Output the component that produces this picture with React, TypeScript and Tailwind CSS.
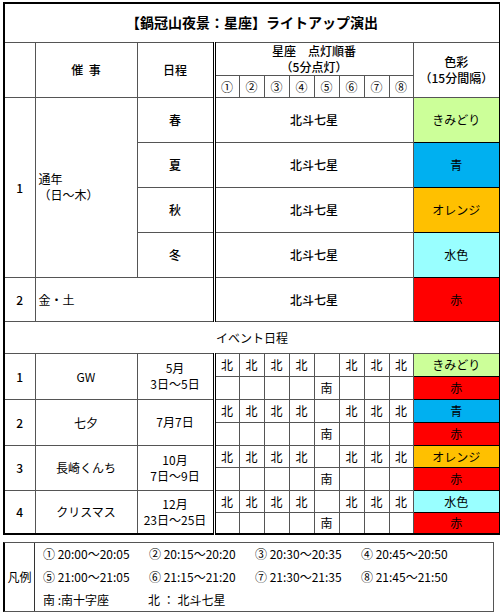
import React from 'react'

const font = { fontFamily: '"Noto Sans CJK JP", "Noto Sans", sans-serif' }

const cell = 'border border-[#555] text-center align-middle p-0 text-[12px] leading-[15px] text-black'
const dbl = 'border-l-[3px] border-l-black border-double'
const circled = ['①', '②', '③', '④', '⑤', '⑥', '⑦', '⑧']

const seasons = [
  { name: '春', color: 'bg-[#ccff99]', label: 'きみどり' },
  { name: '夏', color: 'bg-[#00b0f0]', label: '青' },
  { name: '秋', color: 'bg-[#ffc000]', label: 'オレンジ' },
  { name: '冬', color: 'bg-[#99ffff]', label: '水色' },
]

const events = [
  { no: '1', name: 'GW', date: ['5月', '3日～5日'], color: 'bg-[#ccff99]', label: 'きみどり', h: ['h-[23px]', 'h-[23px]'] },
  { no: '2', name: '七夕', date: ['7月7日'], color: 'bg-[#00b0f0]', label: '青', h: ['h-[23px]', 'h-[23px]'] },
  { no: '3', name: '長崎くんち', date: ['10月', '7日～9日'], color: 'bg-[#ffc000]', label: 'オレンジ', h: ['h-[22px]', 'h-[23px]'] },
  { no: '4', name: 'クリスマス', date: ['12月', '23日～25日'], color: 'bg-[#99ffff]', label: '水色', h: ['h-[22px]', 'h-[22px]'] },
]

const legend = [
  ['① 20:00～20:05', '② 20:15～20:20', '③ 20:30～20:35', '④ 20:45～20:50'],
  ['⑤ 21:00～21:05', '⑥ 21:15～21:20', '⑦ 21:30～21:35', '⑧ 21:45～21:50'],
]

export default function App() {
  return (
    <div className="w-[500px] h-[615px] bg-white overflow-hidden" style={font}>
      <table className="table-fixed border-collapse border-2 border-black w-[496px] ml-[3px] mt-[2px]">
        <colgroup>
          <col className="w-[31px]" />
          <col className="w-[102px]" />
          <col className="w-[77px]" />
          {circled.map((c, i) => (
            <col key={c} className={i === 7 ? 'w-[24px]' : 'w-[25px]'} />
          ))}
          <col className="w-[87px]" />
        </colgroup>
        <tbody>
          <tr>
            <td colSpan={12} className={`${cell} h-[39px] text-[14px] font-bold`}>
              【鍋冠山夜景：星座】ライトアップ演出
            </td>
          </tr>
          <tr>
            <td rowSpan={2} className={cell}></td>
            <td rowSpan={2} className={`${cell} font-medium`}>催&nbsp;&nbsp;事</td>
            <td rowSpan={2} className={`${cell} font-medium`}>日程</td>
            <td colSpan={8} className={`${cell} h-[32px] font-medium ${dbl}`}>
              <div className="leading-[16px]">星座　点灯順番</div>
              <div className="leading-[16px]">（5分点灯）</div>
            </td>
            <td rowSpan={2} className={`${cell} font-medium`}>
              <div className="leading-[16px]">色彩</div>
              <div className="leading-[16px]">（15分間隔）</div>
            </td>
          </tr>
          <tr>
            {circled.map((c, i) => (
              <td key={c} className={`${cell} h-[22px] ${i === 0 ? dbl : ''}`}>
                {c}
              </td>
            ))}
          </tr>
          {seasons.map((s, i) => (
            <tr key={s.name}>
              {i === 0 && (
                <>
                  <td rowSpan={4} className={`${cell} font-medium`}>1</td>
                  <td rowSpan={4} className={`${cell} text-left pl-[3px]`}>
                    <div className="leading-[16px]">通年</div>
                    <div className="leading-[16px]">（日～木）</div>
                  </td>
                </>
              )}
              <td className={`${cell} h-[45px] font-medium`}>{s.name}</td>
              <td colSpan={8} className={`${cell} font-medium ${dbl}`}>
                北斗七星
              </td>
              <td className={`${cell} border-black ${s.color}`}>{s.label}</td>
            </tr>
          ))}
          <tr>
            <td className={`${cell} h-[44px] font-medium`}>2</td>
            <td colSpan={2} className={`${cell} text-left pl-[3px]`}>金・土</td>
            <td colSpan={8} className={`${cell} font-medium ${dbl}`}>
              北斗七星
            </td>
            <td className={`${cell} border-black bg-[#ff0000]`}>赤</td>
          </tr>
          <tr>
            <td colSpan={12} className={`${cell} h-[32px]`}>イベント日程</td>
          </tr>
          {events.map(ev => (
            <React.Fragment key={ev.no}>
              <tr>
                <td rowSpan={2} className={`${cell} font-medium`}>{ev.no}</td>
                <td rowSpan={2} className={cell}>{ev.name}</td>
                <td rowSpan={2} className={cell}>
                  {ev.date.map((d, i) => (
                    <div key={i} className="leading-[16px]">{d}</div>
                  ))}
                </td>
                {circled.map((c, i) => (
                  <td key={c} className={`${cell} ${ev.h[0]} ${i === 0 ? dbl : ''}`}>
                    {i === 4 ? '' : '北'}
                  </td>
                ))}
                <td className={`${cell} border-black ${ev.color}`}>{ev.label}</td>
              </tr>
              <tr>
                {circled.map((c, i) => (
                  <td key={c} className={`${cell} ${ev.h[1]} ${i === 0 ? dbl : ''}`}>
                    {i === 4 ? '南' : ''}
                  </td>
                ))}
                <td className={`${cell} border-black bg-[#ff0000]`}>赤</td>
              </tr>
            </React.Fragment>
          ))}
        </tbody>
      </table>

      <div className="flex ml-[3px] mt-[7px] w-[491px] h-[70px] border border-[#555] border-l-2 border-l-black text-[12px] text-black">
        <div className="w-[30px] flex items-center justify-center border-r border-[#333]">凡例</div>
        <div className="flex flex-col justify-center gap-[9px] pl-[8px]">
          {legend.map((row, r) => (
            <div key={r} className="flex leading-[14px]">
              {row.map(t => (
                <span key={t} className="w-[106px] whitespace-nowrap">{t}</span>
              ))}
            </div>
          ))}
          <div className="flex leading-[14px]">
            <span className="w-[105px]">南&nbsp;:南十字座</span>
            <span>北&nbsp;：&nbsp;北斗七星</span>
          </div>
        </div>
      </div>
    </div>
  )
}
